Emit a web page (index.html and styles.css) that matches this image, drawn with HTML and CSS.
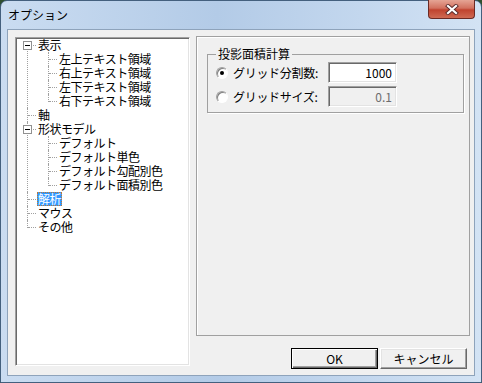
FILE: index.html
```html
<!DOCTYPE html>
<html lang="ja">
<head>
    <meta charset="UTF-8">
    <title>オプション</title>
    <link rel="stylesheet" href="styles.css">
</head>
<body>
    <div class="window">
        <div class="titlebar">
            <span class="title">オプション</span>
            <span class="close">
                <svg width="14" height="11" viewBox="0 0 14 11">
                    <path d="M3 2 L11 9 M11 2 L3 9" stroke="#5a2a2a" stroke-width="4" stroke-linecap="square"/>
                    <path d="M3 2 L11 9 M11 2 L3 9" stroke="#fff" stroke-width="2.2" stroke-linecap="square"/>
                </svg>
            </span>
        </div>

        <div class="client">
            <div class="tree-box">
                <ul class="tree">
                    <li><span class="toggle"></span><span class="label">表示</span>
                        <ul>
                            <li><span class="label">左上テキスト領域</span></li>
                            <li><span class="label">右上テキスト領域</span></li>
                            <li><span class="label">左下テキスト領域</span></li>
                            <li><span class="label">右下テキスト領域</span></li>
                        </ul>
                    </li>
                    <li><span class="label">軸</span></li>
                    <li><span class="toggle"></span><span class="label">形状モデル</span>
                        <ul>
                            <li><span class="label">デフォルト</span></li>
                            <li><span class="label">デフォルト単色</span></li>
                            <li><span class="label">デフォルト勾配別色</span></li>
                            <li><span class="label">デフォルト面積別色</span></li>
                        </ul>
                    </li>
                    <li><span class="label selected">解析</span></li>
                    <li><span class="label">マウス</span></li>
                    <li><span class="label">その他</span></li>
                </ul>
            </div>

            <div class="side">
                <div class="panel">
                    <fieldset class="group">
                        <legend>投影面積計算</legend>
                        <div class="row">
                            <span class="radio checked"></span>
                            <span class="row-label">グリッド分割数:</span>
                            <span class="field">1000</span>
                        </div>
                        <div class="row">
                            <span class="radio"></span>
                            <span class="row-label">グリッドサイズ:</span>
                            <span class="field disabled">0.1</span>
                        </div>
                    </fieldset>
                </div>
                <div class="buttons">
                    <button type="button" class="btn default">OK</button>
                    <button type="button" class="btn">キャンセル</button>
                </div>
            </div>
        </div>
    </div>
</body>
</html>
```

FILE: styles.css
```css
body {
    margin: 0;
    padding: 0;
    font-family: "Noto Sans CJK JP", "Liberation Sans", sans-serif;
    font-size: 12px;
    background-color: #2f4f2f;
}

.window {
    width: 482px;
    height: 383px;
    box-sizing: border-box;
    display: flex;
    flex-direction: column;
    padding: 0 6px 6px;
    border: 1px solid #44607e;
    border-radius: 7px 7px 0 0;
    background: linear-gradient(to right, #cadcf1 0, #b3cbe7 45%, #c3d7ee 75%, #d3e3f4 100%);
}

.titlebar {
    height: 28px;
    display: flex;
    justify-content: space-between;
    align-items: flex-start;
}

.title {
    margin-top: 6px;
    margin-left: 1px;
    line-height: 16px;
    color: #000;
}

.close {
    width: 45px;
    height: 18px;
    margin-top: -1px;
    display: flex;
    align-items: center;
    justify-content: center;
    border: 1px solid #6b2a24;
    border-top: none;
    border-radius: 0 0 4px 4px;
    background: linear-gradient(to bottom, #e5a595 0, #d2715f 45%, #c0432f 55%, #cf6a53 100%);
}

.client {
    flex: 1;
    display: flex;
    background-color: #f0f0f0;
    border: 1px solid #8ea3bb;
}

/* tree view */

.tree-box {
    width: 175px;
    height: 329px;
    box-sizing: border-box;
    margin: 7px 0 0 7px;
    background-color: #fff;
    border: 1px solid;
    border-color: #a0a0a0 #fff #fff #a0a0a0;
    box-shadow: inset 1px 1px 0 #696969, inset -1px -1px 0 #e3e3e3;
}

.tree,
.tree ul {
    list-style: none;
    margin: 0;
    padding: 0 0 0 11px;
}

.tree li {
    position: relative;
    padding-left: 10px;
    line-height: 14px;
    white-space: nowrap;
    letter-spacing: -0.5px;
}

.tree li::before {
    content: "";
    position: absolute;
    left: 0;
    top: 0;
    bottom: 0;
    border-left: 1px dotted #a0a0a0;
}

.tree > li:first-child::before {
    top: 7px;
}

.tree li:last-child::before {
    bottom: auto;
    height: 8px;
}

.tree li::after {
    content: "";
    position: absolute;
    left: 1px;
    top: 7px;
    width: 8px;
    border-top: 1px dotted #a0a0a0;
}

.toggle {
    position: absolute;
    left: -4px;
    top: 3px;
    width: 9px;
    height: 9px;
    box-sizing: border-box;
    border: 1px solid #919191;
    background-color: #fff;
    z-index: 1;
}

.toggle::after {
    content: "";
    position: absolute;
    left: 1px;
    top: 3px;
    width: 5px;
    height: 1px;
    background-color: #000;
}

.label {
    display: inline-block;
    padding: 0 1px;
    height: 14px;
    color: #000;
}

.label.selected {
    background-color: #3399ff;
    color: #fff;
    outline: 1px dotted #c07830;
    outline-offset: -1px;
}

/* right side */

.side {
    width: 274px;
    margin: 6px 0 0 6px;
    display: flex;
    flex-direction: column;
}

.panel {
    height: 300px;
    box-sizing: border-box;
    border: 1px solid #a0a0a0;
    box-shadow: inset 1px 1px 0 #fff;
}

.group {
    margin: 10px 5px 0 10px;
    padding: 0 0 5px 8px;
    min-width: 0;
    border: 1px solid #a0a0a0;
    box-shadow: 1px 1px 0 #fff;
}

.group legend {
    padding: 0 2px;
    line-height: 14px;
}

.row {
    display: flex;
    align-items: center;
    height: 21px;
    margin-top: 3px;
}

.row:first-of-type {
    margin-top: 1px;
}

.radio {
    position: relative;
    width: 12px;
    height: 12px;
    box-sizing: border-box;
    border-radius: 50%;
    border: 1px solid;
    border-color: #a0a0a0 #fff #fff #a0a0a0;
    box-shadow: inset 1px 1px 0 #808080;
    background-color: #fff;
}

.radio.checked::after {
    content: "";
    position: absolute;
    left: 3px;
    top: 3px;
    width: 4px;
    height: 4px;
    border-radius: 50%;
    background-color: #000;
}

.row-label {
    width: 95px;
    margin-left: 5px;
    letter-spacing: -0.3px;
}

.field {
    width: 69px;
    height: 21px;
    box-sizing: border-box;
    padding: 0 4px;
    line-height: 19px;
    text-align: right;
    background-color: #fff;
    border: 1px solid;
    border-color: #a0a0a0 #fff #fff #a0a0a0;
    box-shadow: inset 1px 1px 0 #696969, inset -1px -1px 0 #e3e3e3;
}

.field.disabled {
    background-color: #f0f0f0;
    color: #6d6d6d;
}

.buttons {
    display: flex;
    justify-content: flex-end;
    gap: 2px;
    margin: 12px 3px 0 0;
}

.btn {
    width: 87px;
    height: 21px;
    padding: 0;
    font-family: inherit;
    font-size: 12px;
    color: #000;
    background-color: #f0f0f0;
    border: 1px solid;
    border-color: #fff #696969 #696969 #fff;
    box-shadow: inset -1px -1px 0 #a0a0a0, inset 1px 1px 0 #e3e3e3;
}

.btn.default {
    border-color: #000;
    box-shadow: inset 1px 1px 0 #fff, inset -1px -1px 0 #696969, inset -2px -2px 0 #a0a0a0;
}
```
